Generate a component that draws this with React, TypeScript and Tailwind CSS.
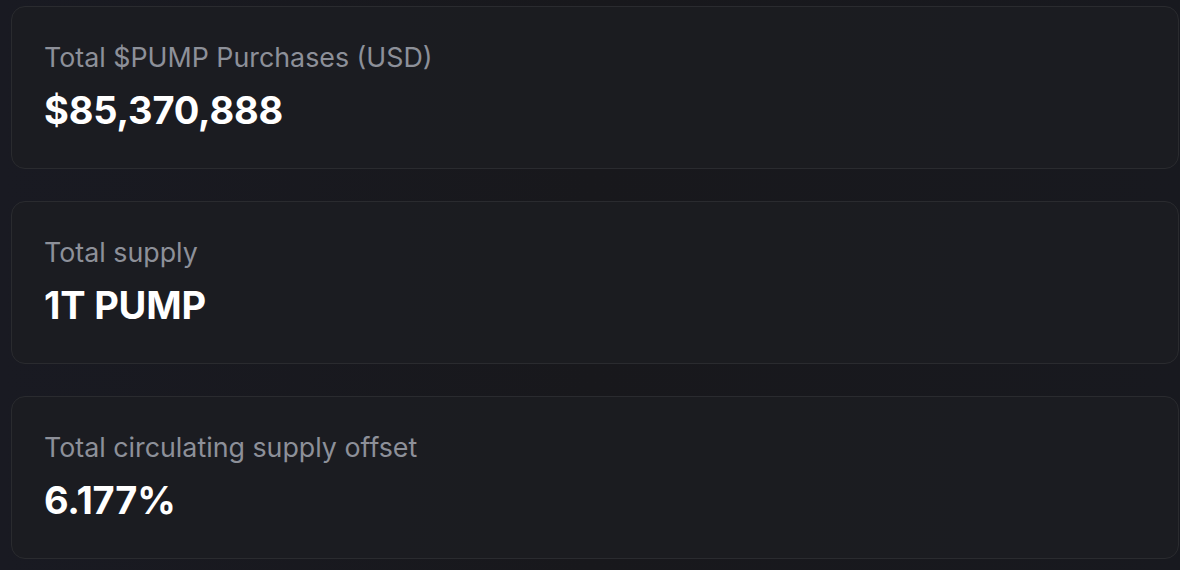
const stats = [
  { label: 'Total $PUMP Purchases (USD)', value: '$85,370,888' },
  { label: 'Total supply', value: '1T PUMP' },
  { label: 'Total circulating supply offset', value: '6.177%' },
];

function StatCard({ label, value }: { label: string; value: string }) {
  return (
    <div className="flex h-[163px] flex-col rounded-[14px] border border-[#2a2b2f] bg-[#1c1d21]/90 px-[32px] pt-[32px]">
      <p className="text-[26.8px] leading-[37px] text-[#8d9099]">{label}</p>
      <p className="mt-[10px] text-[38px] font-bold leading-[48px] tracking-[-0.2px] text-white">{value}</p>
    </div>
  );
}

export default function App() {
  return (
    <div
      className="h-[570px] w-[1180px] overflow-hidden bg-gradient-to-r from-[#191a22] via-[#18181c] to-[#18191f] pt-[6px] pl-[11px] pr-[1px]"
      style={{ fontFamily: 'Inter, "Noto Sans", sans-serif' }}
    >
      <div className="flex flex-col gap-[32px]">
        {stats.map((s) => (
          <StatCard key={s.label} label={s.label} value={s.value} />
        ))}
      </div>
    </div>
  );
}
